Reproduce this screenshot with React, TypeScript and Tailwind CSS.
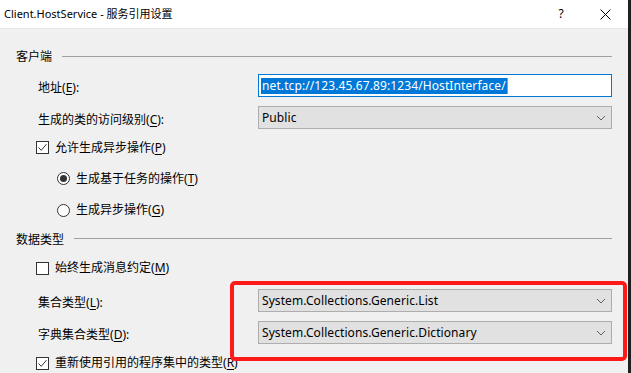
import React from "react";

const font = { fontFamily: '"Segoe UI", "Noto Sans", "Noto Sans CJK SC", sans-serif' };

function CheckBox({ checked }: { checked: boolean }) {
  return (
    <span className="w-[13px] h-[13px] border border-[#333333] bg-white flex items-center justify-center shrink-0">
      {checked && (
        <svg width="11" height="11" viewBox="0 0 11 11">
          <path d="M1.5 5.5 L4.2 8.3 L9.5 2.2" fill="none" stroke="#333333" strokeWidth="1" />
        </svg>
      )}
    </span>
  );
}

function Radio({ checked }: { checked: boolean }) {
  return (
    <span className="w-[13px] h-[13px] rounded-full border border-[#333333] bg-white flex items-center justify-center shrink-0">
      {checked && <span className="w-[7px] h-[7px] rounded-full bg-[#333333]" />}
    </span>
  );
}

function Chevron() {
  return (
    <svg width="10" height="6" viewBox="0 0 10 6" className="shrink-0">
      <path d="M1 1 L5 5 L9 1" fill="none" stroke="#606060" strokeWidth="1" />
    </svg>
  );
}

function Select({ value }: { value: string }) {
  return (
    <div className="w-[354px] h-[23px] border border-[#adadad] bg-[#e1e1e1] flex items-center pl-[3px] pr-[5px] text-[12px] text-black">
      <span className="flex-1 tracking-[0.08px]">{value}</span>
      <Chevron />
    </div>
  );
}

function Group({ title }: { title: string }) {
  return (
    <div className="h-[16px] flex items-center gap-[10px] pl-[16px] pr-[16px]">
      <span className="text-[12px] leading-none text-black">{title}</span>
      <span className="flex-1 h-px bg-[#a0a0a0] -translate-y-px" />
    </div>
  );
}

function Label({ text, m, rest }: { text: string; m: string; rest: string }) {
  return (
    <span className="text-[12px] text-black whitespace-nowrap">
      {text}(<u className="underline-offset-2">{m}</u>){rest}
    </span>
  );
}

export default function App() {
  return (
    <div className="w-[631px] h-[373px] overflow-hidden flex bg-[#1f1f1f] relative" style={font}>
      <div className="w-[628px] h-full flex flex-col bg-[#f0f0f0]">
        <div className="h-[29px] bg-white flex items-center pl-[4px] border-b border-[#e8e8e8] shrink-0">
          <span className="text-[11px] text-black flex-1">Client.HostService - 服务引用设置</span>
          <span className="text-[12px] text-black w-[20px] text-center mr-[29px]">?</span>
          <svg width="11" height="11" viewBox="0 0 11 11" className="mr-[17px]">
            <path d="M0.5 0.5 L10.5 10.5 M10.5 0.5 L0.5 10.5" stroke="#000" strokeWidth="1" />
          </svg>
        </div>

        <div className="mt-[20px]">
          <Group title="客户端" />
        </div>

        <div className="mt-[9px] flex items-center h-[23px]">
          <span className="w-[258px] pl-[38px]"><Label text="地址" m="E" rest=":" /></span>
          <div className="w-[354px] h-[23px] border border-[#0078d7] bg-white flex items-center pl-[2px]">
            <span className="bg-[#0078d7] text-white text-[12px] h-[16px] leading-[16px] px-px tracking-[0.1px]">net.tcp://123.45.67.89:1234/HostInterface/</span>
            <span className="w-px h-[16px] bg-[#e88a2a]" />
          </div>
        </div>

        <div className="mt-[9px] flex items-center h-[23px]">
          <span className="w-[258px] pl-[38px]"><Label text="生成的类的访问级别" m="C" rest=":" /></span>
          <Select value="Public" />
        </div>

        <div className="mt-[9px] h-[20px] flex items-center pl-[36px] gap-[6px]">
          <CheckBox checked />
          <Label text="允许生成异步操作" m="P" rest="" />
        </div>

        <div className="mt-[12px] h-[20px] flex items-center pl-[57px] gap-[6px]">
          <Radio checked />
          <Label text="生成基于任务的操作" m="T" rest="" />
        </div>

        <div className="mt-[12px] h-[20px] flex items-center pl-[57px] gap-[6px]">
          <Radio checked={false} />
          <Label text="生成异步操作" m="G" rest="" />
        </div>

        <div className="mt-[12px]">
          <Group title="数据类型" />
        </div>

        <div className="mt-[11px] h-[20px] flex items-center pl-[36px] gap-[6px]">
          <CheckBox checked={false} />
          <Label text="始终生成消息约定" m="M" rest="" />
        </div>

        <div className="mt-[11px] flex items-center h-[23px]">
          <span className="w-[258px] pl-[38px]"><Label text="集合类型" m="L" rest=":" /></span>
          <Select value="System.Collections.Generic.List" />
        </div>

        <div className="mt-[9px] flex items-center h-[23px]">
          <span className="w-[258px] pl-[38px]"><Label text="字典集合类型" m="D" rest=":" /></span>
          <Select value="System.Collections.Generic.Dictionary" />
        </div>

        <div className="mt-[9px] h-[20px] flex items-center pl-[36px] gap-[6px] shrink-0">
          <CheckBox checked />
          <Label text="重新使用引用的程序集中的类型" m="R" rest="" />
        </div>
      </div>
      <div className="flex-1 bg-[#1f1f1f]" />

      <div className="absolute left-[230px] top-[281px] w-[397px] h-[80px] border-[4px] border-[#ff1a1a] rounded-[5px] pointer-events-none" />
    </div>
  );
}
